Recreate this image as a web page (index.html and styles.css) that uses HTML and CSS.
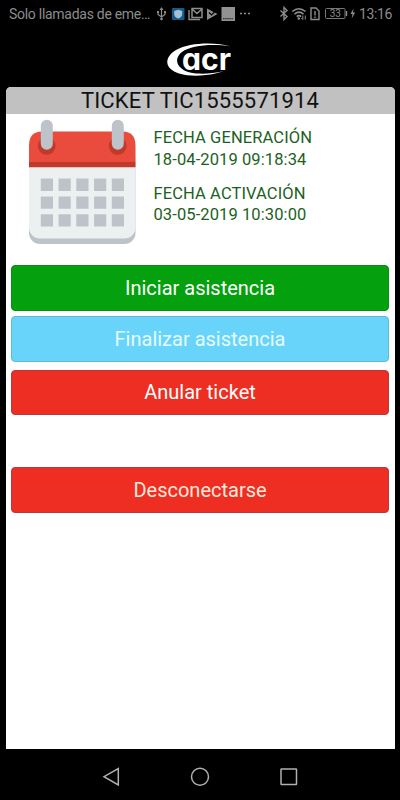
FILE: index.html
```html
<!DOCTYPE html>
<html lang="es">
<head>
	<meta charset="utf-8">
	<title>Ticket</title>
	<link rel="stylesheet" href="styles.css">
</head>

<body>

<div class="status">
	<span class="carrier">Solo llamadas de eme…</span>
	<svg class="notif" width="98" height="28" viewBox="155 0 98 28">
		<!-- usb -->
		<g fill="none" stroke="#8c8c8c" stroke-width="1.2">
			<path d="M161.500 9V19M158 12v2.500l3.500 2.500l3.500-2.500V12"/>
		</g>
		<path d="M161.500 7l2 3h-4zM157 11h2v2h-2zM164 11h2v2h-2z" fill="#8c8c8c"/>
		<circle cx="161.500" cy="19" r="1.300" fill="#8c8c8c"/>
		<!-- shield -->
		<rect x="172" y="8" width="12.500" height="12" rx="1" fill="#155b8c"/>
		<path d="M178.200 9.800l4 1.200v3q0 3-4 4.500q-4-1.500-4-4.500v-3z" fill="#a4bfd2"/>
		<!-- mail -->
		<path d="M189 10v9.500h11" fill="none" stroke="#8c8c8c" stroke-width="1.400"/>
		<path d="M192 17.500v-9h10v9zM192 9l5 4.500l5-4.500" fill="none" stroke="#8c8c8c" stroke-width="1.500"/>
		<!-- play store -->
		<path d="M207 8.500l10.500 5.500l-10.500 6z" fill="#8c8c8c"/>
		<path d="M209 12.500l2.500 2.500l5-5" fill="none" stroke="#000" stroke-width="1.200"/>
		<!-- picture -->
		<rect x="221.500" y="7" width="13.500" height="14" fill="#929292"/>
		<path d="M223 18.700h10.500" stroke="#333" stroke-width="1.200" stroke-dasharray="1.500 .6"/>
		<path d="M240 13.500h2m2 0h2m2 0h2" stroke="#8c8c8c" stroke-width="1.500"/>
	</svg>
	<svg class="signal" width="80" height="28" viewBox="278 0 80 28">
		<g fill="none" stroke="#8c8c8c" stroke-width="1.400">
			<!-- bluetooth -->
			<path d="M280.500 10.500l6.500 6l-3 3v-12l3 3l-6.500 6"/>
			<!-- wifi -->
			<path d="M292.300 11.500q6.500-5.500 13.200 0M294.500 14.200q4.500-4 9 0M296.700 16.700q2.300-2 4.500 0" stroke-width="1.600"/>
			<path d="M302.800 15.500v4m-1.500-1.500l1.500 1.500M305.300 19.500v-4" stroke-width="1"/>
			<!-- sim -->
			<path d="M311 8h5l3 3v8.500h-8zM315 11v4.500m0 1v1.500"/>
			<rect x="325.500" y="8.500" width="19.500" height="10" rx="1" stroke="#777" stroke-width="1"/>
		</g>
		<circle cx="298.800" cy="18.500" r="1.300" fill="#8c8c8c"/>
		<path d="M346.500 11v5" stroke="#8c8c8c" stroke-width="1.400"/>
		<text x="335.300" y="17.200" class="battery">33</text>
		<path d="M353.500 8.500l-3 5.500h2l-.8 4.500l3.500-6h-2.200z" fill="#8c8c8c"/>
	</svg>
	<span class="clock">13:16</span>
</div>

<div class="logo">
	<svg width="80" height="56" viewBox="160 29 80 56">
		<path d="M231 46.500C216 42 190 42 176 50C163 58 165 69 179 73.500C193 77.500 211 75.500 224 71C211 74 199 74.500 190 72.500C177 69 173 59 182 52C191 45 213 43.500 231 46.500z" fill="#fff"/>
		<text x="182" y="69.500" textLength="49" lengthAdjust="spacingAndGlyphs" class="logotext">acr</text>
	</svg>
</div>

<div class="panel">
	<div class="title">TICKET TIC1555571914</div>
	<div class="info">
		<svg class="calendar" width="108" height="126" viewBox="28 119 108 126">
			<rect x="29" y="149" width="106.500" height="95" rx="11" fill="#bdc3c9"/>
			<rect x="29" y="140" width="106.500" height="98.500" rx="11" fill="#ecf0f1"/>
			<path d="M29 162v-16.500q0-14 13-14h80.500q13 0 13 14V162z" fill="#e94b3c"/>
			<path d="M29 162h106.500v5.200H29z" fill="#c0392b"/>
			<circle cx="46.700" cy="146" r="8.800" fill="#c0392b"/>
			<circle cx="117.700" cy="146" r="8.800" fill="#c0392b"/>
			<rect x="40.800" y="119.700" width="12" height="30" rx="6" fill="#bdc3c9"/>
			<rect x="111.800" y="119.700" width="12" height="30" rx="6" fill="#bdc3c9"/>
			<path d="M40.800 184.800h83.200M40.800 202.600h83.200M40.800 220.400h83.200" stroke="#bdc3c9" stroke-width="12.400" stroke-dasharray="12.200 5.550"/>
		</svg>
		<div class="dates">
			<p class="gen">FECHA GENERACIÓN<br>18-04-2019 09:18:34</p>
			<p class="act">FECHA ACTIVACIÓN<br>03-05-2019 10:30:00</p>
		</div>
	</div>
	<div class="buttons">
		<button class="btn start">Iniciar asistencia</button>
		<button class="btn finish">Finalizar asistencia</button>
		<button class="btn cancel">Anular ticket</button>
		<button class="btn logout">Desconectarse</button>
	</div>
</div>

<div class="nav">
	<svg width="20" height="20" viewBox="0 0 20 20"><path d="M17.300 1.500v16.500L3 9.700z"/></svg>
	<svg width="20" height="20" viewBox="0 0 20 20"><circle cx="10" cy="9.700" r="8.500"/></svg>
	<svg width="20" height="20" viewBox="0 0 20 20"><rect x="2" y="2" width="15.500" height="15.500" rx=".5"/></svg>
</div>

</body>
</html>
```

FILE: styles.css
```css
*{
	box-sizing:border-box;
}
body{
	margin:0;
	width:400px;
	height:800px;
	overflow:hidden;
	background-color:#000;
	font-family:Roboto,"Liberation Sans",sans-serif;
	display:flex;
	flex-direction:column;
}
svg{
	display:block;
	flex:none;
}
.status{
	height:28px;
	display:flex;
	align-items:center;
	padding-left:9px;
	color:#8c8c8c;
	font-size:14px;
	white-space:nowrap;
}
.carrier{
	width:146px;
	letter-spacing:-0.28px;
}
.signal{
	margin-left:25px;
}
.battery{
	font-size:10px;
	fill:#8c8c8c;
	text-anchor:middle;
}
.clock{
	margin-left:1px;
	letter-spacing:-0.4px;
}
.logo{
	height:59px;
	padding:1px 0 0 160px;
}
.logotext{
	font-family:Inter,Lato,sans-serif;
	font-feature-settings:"cv11";
	font-weight:700;
	font-size:30px;
	fill:#fff;
}
.panel{
	height:662px;
	margin:0 5.5px;
	background-color:#fff;
	border-radius:5px 5px 0 0;
	overflow:hidden;
}
.title{
	height:27px;
	line-height:28px;
	background-color:#c1c1c1;
	color:#111;
	font-size:22px;
	letter-spacing:0.17px;
	text-align:center;
	white-space:nowrap;
}
.info{
	height:151px;
	display:flex;
	padding:5px 0 0 22.5px;
}
.dates{
	padding:8px 0 0 17.5px;
	color:#1d5f25;
	font-size:16.5px;
	letter-spacing:0.1px;
	line-height:21.5px;
	white-space:nowrap;
}
.dates p{
	margin:0 0 12.5px;
}
.buttons{
	padding:0 5.5px;
	display:flex;
	flex-direction:column;
}
.btn{
	height:45.5px;
	margin:0 0 5.5px;
	padding:1px 0 0;
	border:1px solid #0a8f16;
	border-radius:4px;
	background-color:#05a00d;
	color:#fff;
	font-family:inherit;
	font-size:20px;
}
.finish{
	margin-bottom:8px;
	background-color:#68d4fa;
	border-color:#59bfd9;
	color:#e6fbff;
}
.cancel{
	margin-bottom:52px;
	padding:0;
}
.cancel,.logout{
	background-color:#ee2e22;
	border-color:#b63a3c;
}
.logout{
	color:#ffe9dc;
}
.nav{
	height:51px;
	display:flex;
	justify-content:space-between;
	padding:18px 101px 0;
}
.nav svg{
	fill:none;
	stroke:#b0b0b0;
	stroke-width:1.5;
}
```
